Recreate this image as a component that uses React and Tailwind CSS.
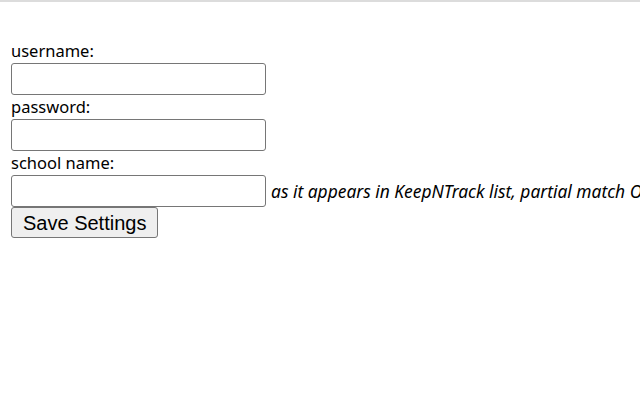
import React, { useState } from "react";

const label = "block h-[24px] leading-[24px] text-[16.5px] text-black";
const input = "block w-[255px] h-[32px] border border-[#767676] rounded-[3px] bg-white px-1 text-[17px]";

export default function App() {
    const [form, setForm] = useState({ username: "", password: "", school: "" });
    const set = (k) => (e) => setForm(p => ({ ...p, [k]: e.target.value }));

    return (
        <div className="w-[640px] h-[400px] overflow-hidden bg-white font-['Noto_Sans',sans-serif]">
            <div className="h-[2px] bg-[#dcdcdc]" />
            <form className="pt-[37px] pl-[11px]" onSubmit={e => e.preventDefault()}>
                <label className={label}>username:</label>
                <input value={form.username} onChange={set("username")} className={input} />
                <label className={label}>password:</label>
                <input type="password" value={form.password} onChange={set("password")} className={input} />
                <label className={label}>school name:</label>
                <div className="flex items-center whitespace-nowrap">
                    <input value={form.school} onChange={set("school")} className={input} />
                    <span className="ml-[5px] italic text-[17.4px] text-black">as it appears in KeepNTrack list, partial match OK</span>
                </div>
                <button type="submit" className="h-[31px] px-[11px] border border-[#767676] rounded-[3px] bg-[#efefef] text-[20px] leading-none text-black font-['Liberation_Sans',Arial,sans-serif]">Save Settings</button>
            </form>
        </div>
    );
}
